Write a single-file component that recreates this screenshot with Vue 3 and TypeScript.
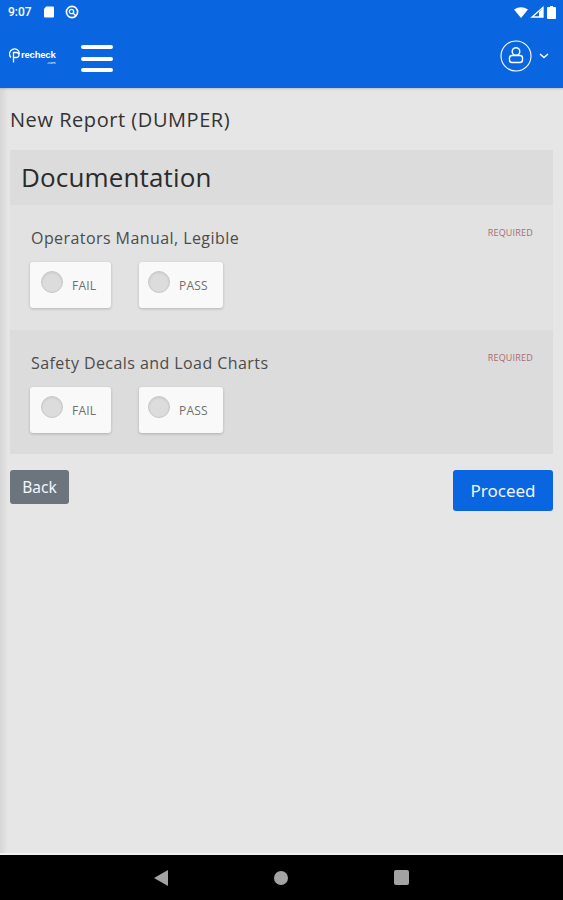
<script setup lang="ts">
interface Item { label: string; shade: boolean }
const items: Item[] = [
  { label: 'Operators Manual, Legible', shade: false },
  { label: 'Safety Decals and Load Charts', shade: true },
]
const options = ['FAIL', 'PASS']
</script>

<template>
  <div class="screen">
    <header class="top">
      <div class="status">
        <div class="status-left">
          <span class="time">9:07</span>
          <svg width="10" height="12" viewBox="0 0 10 12"><path d="M2 .5h7a1 1 0 0 1 1 1v9a1 1 0 0 1-1 1H1a1 1 0 0 1-1-1V3z" fill="#fff" /></svg>
          <svg width="14" height="14" viewBox="0 0 14 14" fill="none" stroke="#fff"><circle cx="7" cy="7" r="5.6" stroke-width="1.6" /><circle cx="6.500" cy="6.500" r="2.200" stroke-width="1.300" /><path d="M8 8l3 3" stroke-width="1.500" /></svg>
        </div>
        <div class="status-right">
          <svg class="wifi" width="14" height="11" viewBox="0 0 14 11"><path d="M0 2.500Q7-2 14 2.500L7 11z" fill="#fff" /></svg>
          <svg class="signal" width="14" height="12" viewBox="0 0 14 12" fill="none" stroke="#fff" stroke-width="1.300"><path d="M13 1.500V11H2z" /><path d="M9 6v5h4V2.500z" fill="#fff" stroke="none" /></svg>
          <svg width="9" height="13" viewBox="0 0 9 13"><path d="M3 0h3v1h2a1 1 0 0 1 1 1v10a1 1 0 0 1-1 1H1a1 1 0 0 1-1-1V2a1 1 0 0 1 1-1h2z" fill="#fff" /></svg>
        </div>
      </div>
      <div class="toolbar">
        <div class="brand">
          <div class="logo">
            <svg width="12" height="16" viewBox="0 0 12 16" fill="none" stroke="#fff" stroke-width="1.300"><path d="M2 10.500A5 5 0 1 1 10.500 7" /><path d="M4.500 15.500V5.500h3a2.300 2.300 0 0 1 0 5h-3" /></svg>
            <span class="logo-word">
              <span class="logo-text">recheck</span>
              <span class="logo-sub">.com</span>
            </span>
          </div>
          <div class="burger"><i></i><i></i><i></i></div>
        </div>
        <div class="account">
          <svg width="32" height="32" viewBox="0 0 32 32" fill="none" stroke="#fff"><circle cx="16" cy="16" r="15" stroke-width="1.100" /><circle cx="16" cy="11.500" r="3.800" stroke-width="1.400" /><rect x="9.500" y="15.500" width="13" height="7" rx="2.500" stroke-width="1.400" /></svg>
          <svg width="10" height="6" viewBox="0 0 10 6" fill="none" stroke="#fff" stroke-width="1.500"><path d="M1 1l4 3.500L9 1" /></svg>
        </div>
      </div>
    </header>

    <main class="content">
      <h1 class="page-title">New Report (DUMPER)</h1>
      <section class="card">
        <h2 class="card-title">Documentation</h2>
        <div v-for="item in items" :key="item.label" class="row" :class="{ shade: item.shade }">
          <div class="row-main">
            <p class="label">{{ item.label }}</p>
            <div class="options">
              <div v-for="opt in options" :key="opt" class="option" :class="opt.toLowerCase()">
                <span class="radio"></span>
                <span class="opt-text">{{ opt }}</span>
              </div>
            </div>
          </div>
          <span class="required">REQUIRED</span>
        </div>
      </section>
      <div class="actions">
        <button class="btn back">Back</button>
        <button class="btn proceed">Proceed</button>
      </div>
    </main>

    <footer class="nav">
      <svg width="14" height="16" viewBox="0 0 14 16"><path d="M14 0v16L0 8z" fill="#a3a3a3" /></svg>
      <span class="dot"></span>
      <span class="square"></span>
    </footer>
  </div>
</template>

<style>
html, body { margin: 0; }
</style>

<style scoped>
.screen {
  width: 563px;
  height: 900px;
  display: flex;
  flex-direction: column;
  font-family: "Open Sans", "Noto Sans", sans-serif;
  background: #e6e6e6;
  overflow: hidden;
}
.top {
  height: 88px;
  flex: none;
  background: #0a66e0;
  color: #fff;
  box-shadow: 0 1px 2px rgba(0, 0, 0, .18);
  position: relative;
}
.status {
  height: 24px;
  display: flex;
  align-items: center;
  justify-content: space-between;
  padding: 0 7px 0 8px;
}
.status-left, .status-right { display: flex; align-items: center; }
.status-left { gap: 11px; }
.status-right { gap: 2px; }
.signal { margin-right: 1px; }
.time { font-family: Roboto, sans-serif; font-size: 12px; font-weight: 500; width: 26px; margin-right: -1px; }
.toolbar {
  height: 64px;
  display: flex;
  align-items: center;
  justify-content: space-between;
  padding: 0 14px 0 9px;
}
.brand { display: flex; align-items: center; gap: 23px; }
.logo { display: flex; align-items: center; width: 49px; margin-bottom: 2px; }
.logo-word { display: flex; flex-direction: column; align-items: flex-end; margin-top: 5px; }
.logo-text { font-family: "Liberation Sans", sans-serif; font-weight: 700; font-size: 9.500px; line-height: 10px; letter-spacing: -.2px; }
.logo-sub { font-family: "Liberation Sans", sans-serif; font-size: 4px; line-height: 4px; margin-top: 1px; }
.burger { width: 32px; display: flex; flex-direction: column; gap: 7.500px; margin-top: 5px; }
.burger i { height: 4px; border-radius: 2px; background: #fff; display: block; }
.account { display: flex; align-items: center; gap: 7px; }
.content {
  flex: 1;
  padding: 0 10px;
  background: linear-gradient(90deg, #d6d6d6 0, #e6e6e6 8px);
  border-bottom: 2px solid #f2f2f2;
}
.page-title {
  margin: 18px 0 16px;
  font-size: 20px;
  line-height: 28px;
  font-weight: 400;
  letter-spacing: .55px;
  color: #333;
}
.card-title {
  margin: 0;
  height: 55px;
  padding-left: 11px;
  font-size: 26px;
  line-height: 54px;
  font-weight: 400;
  letter-spacing: .15px;
  color: #2b2b2b;
  background: #dcdcdc;
}
.row {
  height: 125px;
  box-sizing: border-box;
  display: flex;
  justify-content: space-between;
  padding: 21px 20px 0 20px;
  background: #e2e2e2;
}
.row.shade { background: #dcdcdc; height: 124px; }
.label {
  margin: 0;
  padding-left: 1px;
  font-size: 16px;
  line-height: 24px;
  letter-spacing: .43px;
  color: #4c4c4c;
}
.options { display: flex; gap: 28px; margin-top: 12px; }
.option {
  height: 46px;
  box-sizing: border-box;
  display: flex;
  align-items: flex-start;
  background: #f9f9f9;
  border-radius: 3px;
  box-shadow: 0 1px 3px rgba(0, 0, 0, .2);
  padding: 9px 0 0 11px;
}
.option.fail { width: 81px; }
.option.pass { width: 84px; padding-left: 9px; }
.radio {
  width: 22px;
  height: 22px;
  box-sizing: border-box;
  border-radius: 50%;
  background: #dcdcdc;
  border: 1px solid #c8c8c8;
  box-shadow: inset 0 1px 2px rgba(0, 0, 0, .08);
}
.opt-text { font-size: 12px; line-height: 16px; letter-spacing: .2px; color: #707070; margin: 7px 0 0 9px; }
.required {
  font-size: 9px;
  line-height: 12px;
  letter-spacing: .2px;
  color: #a86a74;
  margin-top: 1px;
}
.actions {
  display: flex;
  justify-content: space-between;
  align-items: flex-start;
  margin-top: 16px;
}
.btn {
  border: 0;
  border-radius: 3px;
  color: #f2f6fc;
  font-family: "Noto Sans", "Open Sans", sans-serif;
  padding: 0;
}
.back { width: 59px; height: 34px; background: #6c757d; font-size: 15.500px; }
.proceed { width: 100px; height: 41px; background: #0a66e0; font-size: 17px; }
.nav {
  height: 45px;
  flex: none;
  background: #000;
  display: flex;
  align-items: center;
  padding: 0 0 0 154px;
}
.dot { width: 14px; height: 14px; border-radius: 50%; background: #a3a3a3; margin-left: 106px; }
.square { width: 15px; height: 15px; border-radius: 2px; background: #a3a3a3; margin-left: 106px; }
</style>
